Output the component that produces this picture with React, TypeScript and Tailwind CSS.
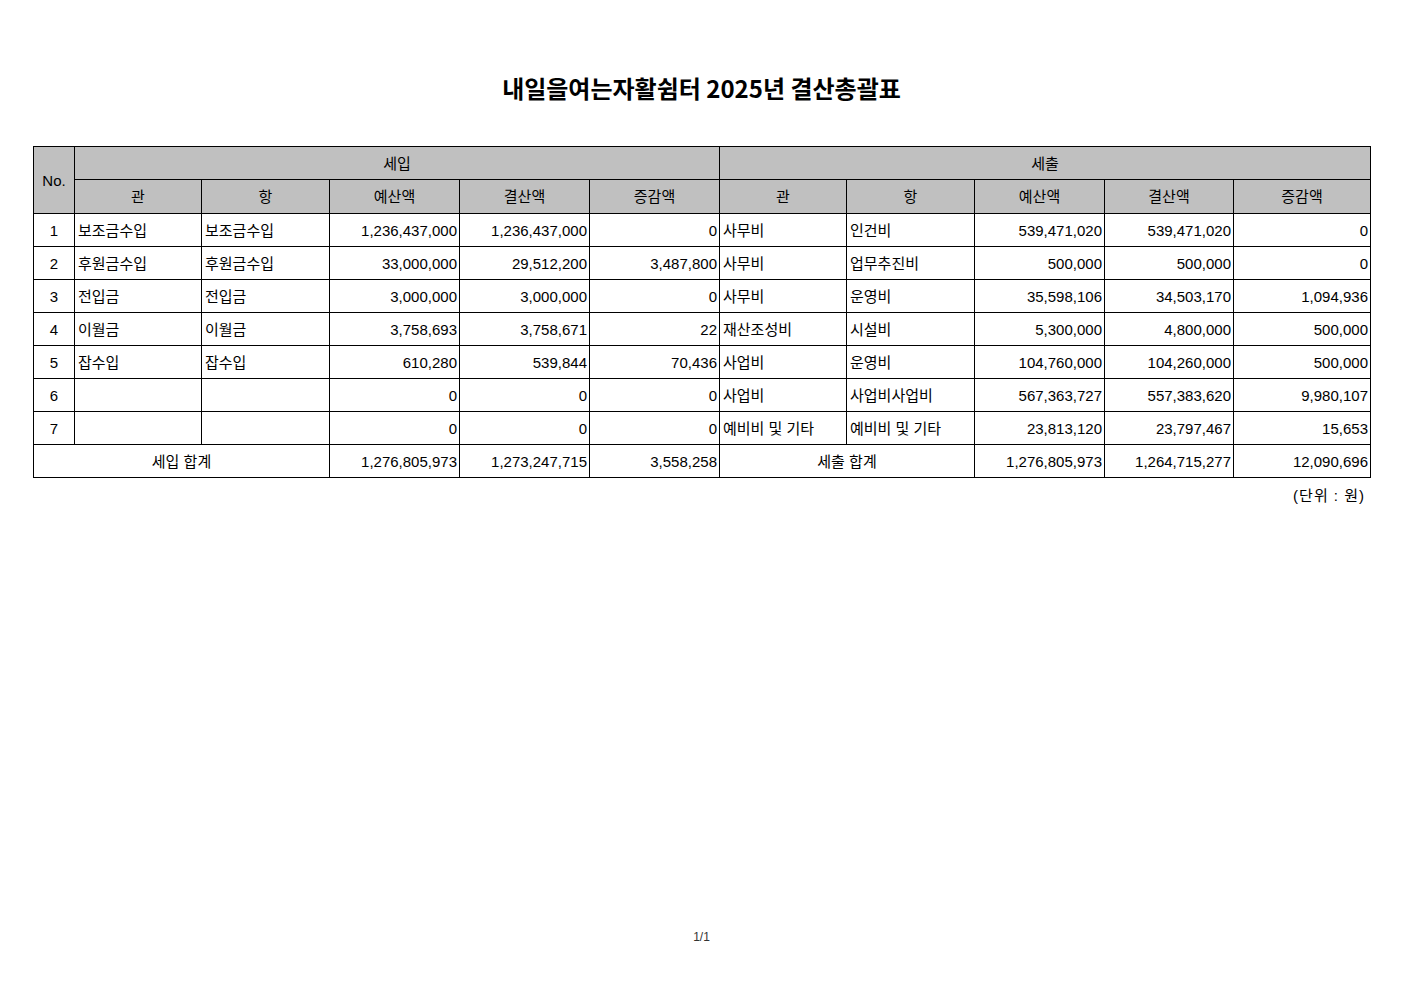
import React from "react";

type Row = {
  no: string;
  inGwan: string;
  inHang: string;
  inBudget: string;
  inSettle: string;
  inDiff: string;
  outGwan: string;
  outHang: string;
  outBudget: string;
  outSettle: string;
  outDiff: string;
};

const rows: Row[] = [
  { no: "1", inGwan: "보조금수입", inHang: "보조금수입", inBudget: "1,236,437,000", inSettle: "1,236,437,000", inDiff: "0", outGwan: "사무비", outHang: "인건비", outBudget: "539,471,020", outSettle: "539,471,020", outDiff: "0" },
  { no: "2", inGwan: "후원금수입", inHang: "후원금수입", inBudget: "33,000,000", inSettle: "29,512,200", inDiff: "3,487,800", outGwan: "사무비", outHang: "업무추진비", outBudget: "500,000", outSettle: "500,000", outDiff: "0" },
  { no: "3", inGwan: "전입금", inHang: "전입금", inBudget: "3,000,000", inSettle: "3,000,000", inDiff: "0", outGwan: "사무비", outHang: "운영비", outBudget: "35,598,106", outSettle: "34,503,170", outDiff: "1,094,936" },
  { no: "4", inGwan: "이월금", inHang: "이월금", inBudget: "3,758,693", inSettle: "3,758,671", inDiff: "22", outGwan: "재산조성비", outHang: "시설비", outBudget: "5,300,000", outSettle: "4,800,000", outDiff: "500,000" },
  { no: "5", inGwan: "잡수입", inHang: "잡수입", inBudget: "610,280", inSettle: "539,844", inDiff: "70,436", outGwan: "사업비", outHang: "운영비", outBudget: "104,760,000", outSettle: "104,260,000", outDiff: "500,000" },
  { no: "6", inGwan: "", inHang: "", inBudget: "0", inSettle: "0", inDiff: "0", outGwan: "사업비", outHang: "사업비사업비", outBudget: "567,363,727", outSettle: "557,383,620", outDiff: "9,980,107" },
  { no: "7", inGwan: "", inHang: "", inBudget: "0", inSettle: "0", inDiff: "0", outGwan: "예비비 및 기타", outHang: "예비비 및 기타", outBudget: "23,813,120", outSettle: "23,797,467", outDiff: "15,653" },
];

const widths = [41, 127, 128, 130, 130, 130, 127, 128, 130, 129, 137];

const cell = "border border-black px-[3px] whitespace-nowrap";
const num = `${cell} text-right pr-[2px]`;
const txt = `${cell} text-left`;
const head = `${cell} bg-[#c0c0c0] text-center font-normal`;

export default function App() {
  return (
    <div
      className="w-[1403px] h-[992px] bg-white text-black flex flex-col"
      style={{ fontFamily: '"Liberation Sans", "Noto Sans CJK KR", sans-serif' }}
    >
      <h1
        className="mt-[72px] text-center text-[24px] leading-[32px] font-bold"
        style={{ fontFamily: '"Noto Sans CJK KR", sans-serif' }}
      >
        내일을여는자활쉼터 2025년 결산총괄표
      </h1>

      <div className="mt-[42px] pl-[33px]">
        <table className="table-fixed border-collapse w-[1338px] text-[15px] leading-none">
          <colgroup>
            {widths.map((w, i) => (
              <col key={i} style={{ width: w }} />
            ))}
          </colgroup>
          <thead>
            <tr className="h-[33px]">
              <th rowSpan={2} className={head}>No.</th>
              <th colSpan={5} className={head}>세입</th>
              <th colSpan={5} className={head}>세출</th>
            </tr>
            <tr className="h-[34px]">
              <th className={head}>관</th>
              <th className={head}>항</th>
              <th className={head}>예산액</th>
              <th className={head}>결산액</th>
              <th className={head}>증감액</th>
              <th className={head}>관</th>
              <th className={head}>항</th>
              <th className={head}>예산액</th>
              <th className={head}>결산액</th>
              <th className={head}>증감액</th>
            </tr>
          </thead>
          <tbody>
            {rows.map((r) => (
              <tr key={r.no} className="h-[33px]">
                <td className={`${cell} text-center`}>{r.no}</td>
                <td className={txt}>{r.inGwan}</td>
                <td className={txt}>{r.inHang}</td>
                <td className={num}>{r.inBudget}</td>
                <td className={num}>{r.inSettle}</td>
                <td className={num}>{r.inDiff}</td>
                <td className={txt}>{r.outGwan}</td>
                <td className={txt}>{r.outHang}</td>
                <td className={num}>{r.outBudget}</td>
                <td className={num}>{r.outSettle}</td>
                <td className={num}>{r.outDiff}</td>
              </tr>
            ))}
            <tr className="h-[33px]">
              <td colSpan={3} className={`${cell} text-center`}>세입 합계</td>
              <td className={num}>1,276,805,973</td>
              <td className={num}>1,273,247,715</td>
              <td className={num}>3,558,258</td>
              <td colSpan={2} className={`${cell} text-center`}>세출 합계</td>
              <td className={num}>1,276,805,973</td>
              <td className={num}>1,264,715,277</td>
              <td className={num}>12,090,696</td>
            </tr>
          </tbody>
        </table>
        <div className="w-[1337px] text-right text-[15px] leading-none pr-[5px] mt-[10px] tracking-[1px]">
          (단위 : 원)
        </div>
      </div>

      <div className="mt-auto mb-[46px] text-center text-[12px] text-[#333]">1/1</div>
    </div>
  );
}
